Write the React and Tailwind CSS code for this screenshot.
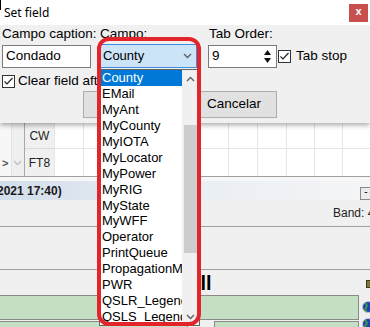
import React from 'react';

const items = [
  'County', 'EMail', 'MyAnt', 'MyCounty', 'MyIOTA', 'MyLocator', 'MyPower', 'MyRIG',
  'MyState', 'MyWFF', 'Operator', 'PrintQueue', 'PropagationMode', 'PWR', 'QSLR_Legend', 'QSLS_Legend',
];

// grid cell widths from x=68, vertical lines land on 97, 126 ... 356
const cells = [29, 29, 29, 29, 29, 29, 29, 29, 28, 28, 28];

function Check() {
  return (
    <svg width="13" height="13" viewBox="0 0 13 13" className="shrink-0">
      <rect x="0.5" y="0.5" width="12" height="12" fill="white" stroke="#333333" />
      <path d="M2.5 6.5 L5 9 L10.5 3" fill="none" stroke="#222222" strokeWidth="1.2" />
    </svg>
  );
}

function Chevron({ up, color = '#606060' }) {
  return (
    <svg width="9" height="6" viewBox="0 0 9 6">
      <path d={up ? 'M1 5 L4.5 1.5 L8 5' : 'M1 1 L4.5 4.5 L8 1'} fill="none" stroke={color} strokeWidth="1.4" />
    </svg>
  );
}

function Globe() {
  return (
    <svg width="9" height="12" viewBox="0 0 9 12">
      <circle cx="7" cy="6" r="5.5" fill="#1d3fb8" />
      <path d="M4 2 Q7 4 5 7 Q3 9 6 11" fill="none" stroke="#3c9a3c" strokeWidth="2" />
      <circle cx="7" cy="6" r="5.5" fill="none" stroke="#c8d0c8" strokeWidth="0.8" />
    </svg>
  );
}

function Dialog() {
  return (
    <div className="relative z-10 h-[123px] bg-[#f0f0f0] shadow-[0_2px_5px_rgba(0,0,0,0.35)] flex flex-col shrink-0 text-[13.5px]">
      <div className="relative h-[25px] bg-white flex items-center shrink-0">
        <div className="absolute left-0 top-0 w-[1px] h-[10px] bg-black" />
        <span className="pl-[4px] text-[12px] font-['Noto_Sans',sans-serif]">Set field</span>
        <div className="ml-auto mr-[2px] w-[19px] h-[18px] bg-[#c7504f] text-white text-[11px] font-bold flex items-center justify-center leading-none pb-[2px]">x</div>
      </div>

      <div className="flex h-[16px] leading-[16px] mt-[1px] whitespace-nowrap">
        <span className="w-[100px] pl-[2px]">Campo caption:</span>
        <span className="w-[109px]">Campo:</span>
        <span>Tab Order:</span>
      </div>

      <div className="flex h-[23px] mt-[3px] items-start">
        <div className="ml-[2px] w-[89px] h-[23px] bg-white border border-[#7a7a7a] pl-[3px] flex items-center">Condado</div>
        <div className="ml-[8px] -mt-[1px] w-[98px] h-[24px] bg-[#cce4f7] border border-[#3d8ee0] pl-[3px] pr-[4px] flex items-center text-[13px]">
          <span>County</span>
          <span className="ml-auto"><Chevron /></span>
        </div>
        <div className="ml-[11px] w-[69px] h-[23px] bg-white border border-[#7a7a7a] pl-[3px] flex items-center">
          <span>9</span>
          <div className="ml-auto mr-[5px] flex flex-col gap-[3px]">
            <svg width="7" height="5" viewBox="0 0 7 5"><path d="M0 5 L3.5 0 L7 5 Z" fill="#111" /></svg>
            <svg width="7" height="5" viewBox="0 0 7 5"><path d="M0 0 L3.5 5 L7 0 Z" fill="#111" /></svg>
          </div>
        </div>
        <div className="ml-[1px] self-center"><Check /></div>
        <span className="ml-[5px] self-center">Tab stop</span>
      </div>

      <div className="flex h-[13px] mt-[7px] items-center whitespace-nowrap">
        <div className="ml-[2px]"><Check /></div>
        <span className="ml-[3px]">Clear field after QSO</span>
      </div>

      <div className="flex h-[27px] mt-[3px]">
        <div className="ml-[83px] w-[86px] h-[27px] bg-[#e1e1e1] border border-[#adadad] flex items-center justify-center">OK</div>
        <div className="ml-[22px] w-[86px] h-[27px] bg-[#e1e1e1] border border-[#adadad] flex items-center justify-center">Cancelar</div>
      </div>
    </div>
  );
}

function Background() {
  return (
    <div className="flex flex-col text-[12px]">
      {/* grid */}
      <div className="flex h-[53px]">
        <div className="w-[14px] bg-[#f7f7f7] flex flex-col">
          <div className="h-[27px]" />
          <div className="flex-1 flex items-center pl-[2px] text-[#555] font-bold text-[11px]">&gt;</div>
        </div>
        <div className="w-[16px] bg-[#efefef] border-l border-[#e4e4e4] flex flex-col">
          <div className="h-[27px]" />
          <div className="flex-1 flex items-center justify-center"><Chevron color="#c0c0c0" /></div>
        </div>
        <div className="w-[38px] bg-[#f0f0f0] border-l border-[#a8a8a8] flex flex-col">
          <div className="h-[26px] border-b border-[#dcdcdc] flex items-end justify-center pb-[3px] text-[#222]">CW</div>
          <div className="flex-1 flex items-center justify-center text-[#222]">FT8</div>
        </div>
        {cells.map((w, i) => (
          <div key={i} style={{ width: w }} className="shrink-0 bg-white border-l border-[#e6e6e6] flex flex-col">
            <div className="h-[26px] border-b border-[#e6e6e6]" />
          </div>
        ))}
      </div>
      <div className="h-[1px] bg-[#a0a0a0]" />
      <div className="h-[4px] bg-[#f7f7f7]" />
      {/* status bar */}
      <div className="h-[19px] bg-gradient-to-r from-[#d3deeb] via-[#e9eef3] to-[#f4f5f7] flex items-center">
        <span className="-ml-[7px] font-bold text-[#1a1a1a] whitespace-nowrap">(2021 17:40)</span>
        <div className="ml-auto mr-[-2px] w-[12px] h-[13px] mt-[5px] border border-[#8a8a8a] bg-[#ececec] flex items-start justify-center leading-[8px] text-[10px]">-</div>
      </div>
      {/* lower area */}
      <div className="flex flex-col h-[127px] bg-[#f0f0f0]">
        <div className="h-[26px] flex items-center whitespace-nowrap">
          <span className="ml-[333px] text-[#222]">Band: 40m</span>
        </div>
        <div className="h-[1px] bg-[#a0a0a0]" />
        <div className="h-[43px]" />
        <div className="h-[1px] bg-[#a0a0a0]" />
        <div className="h-[25px] flex items-center relative">
          <span className="ml-[175px] text-[20px] font-bold leading-none">Call</span>
          <span className="ml-auto mr-[-3px] mt-[3px] w-[7px] h-[8px] bg-[#7c7a3a] border border-[#3a3a18]" />
        </div>
        <div className="h-[25px] flex items-center">
          <div className="-ml-[1px] w-[362px] h-[25px] bg-[#c4dfc4] border border-[#8a8a8a]" />
          <div className="ml-[2px]"><Globe /></div>
        </div>
        <div className="h-[6px] mt-[1px] flex items-start">
          <div className="-ml-[1px] w-[190px] h-[10px] bg-[#c4dfc4] border border-[#8a8a8a]" />
          <div className="ml-[26px] w-[145px] h-[10px] bg-[#c4dfc4] border border-[#8a8a8a]" />
          <div className="ml-[2px] -mt-[3px]"><Globe /></div>
        </div>
      </div>
    </div>
  );
}

function DropList() {
  return (
    <div className="absolute left-[99px] top-[69px] w-[101px] h-[257px] bg-white border border-[#646464] z-20 flex text-[13px]">
      <div className="w-[82px] flex flex-col">
        {items.map((t, i) => (
          <div
            key={t}
            className={`h-[16px] leading-[16px] pl-[2px] whitespace-nowrap overflow-hidden ${i === 0 ? 'bg-[#0078d7] text-white' : 'text-black'}`}
          >
            {t}
          </div>
        ))}
      </div>
      <div className="w-[17px] bg-[#f0f0f0] flex flex-col">
        <div className="h-[17px] flex items-center justify-center"><Chevron up /></div>
        <div className="h-[38px]" />
        <div className="h-[128px] mx-[2px] bg-[#cdcdcd]" />
        <div className="flex-1" />
        <div className="h-[17px] flex items-center justify-center"><Chevron /></div>
      </div>
    </div>
  );
}

export default function App() {
  return (
    <div className="w-[370px] h-[327px] relative overflow-hidden bg-[#f0f0f0] text-[13px] text-black font-['Liberation_Sans',Arial,sans-serif] flex flex-col">
      <Dialog />
      <Background />
      <DropList />
      <div className="absolute left-[97px] top-[37px] w-[104px] h-[289px] border-[4px] border-[#e3242b] rounded-[12px] z-30 pointer-events-none" />
    </div>
  );
}
